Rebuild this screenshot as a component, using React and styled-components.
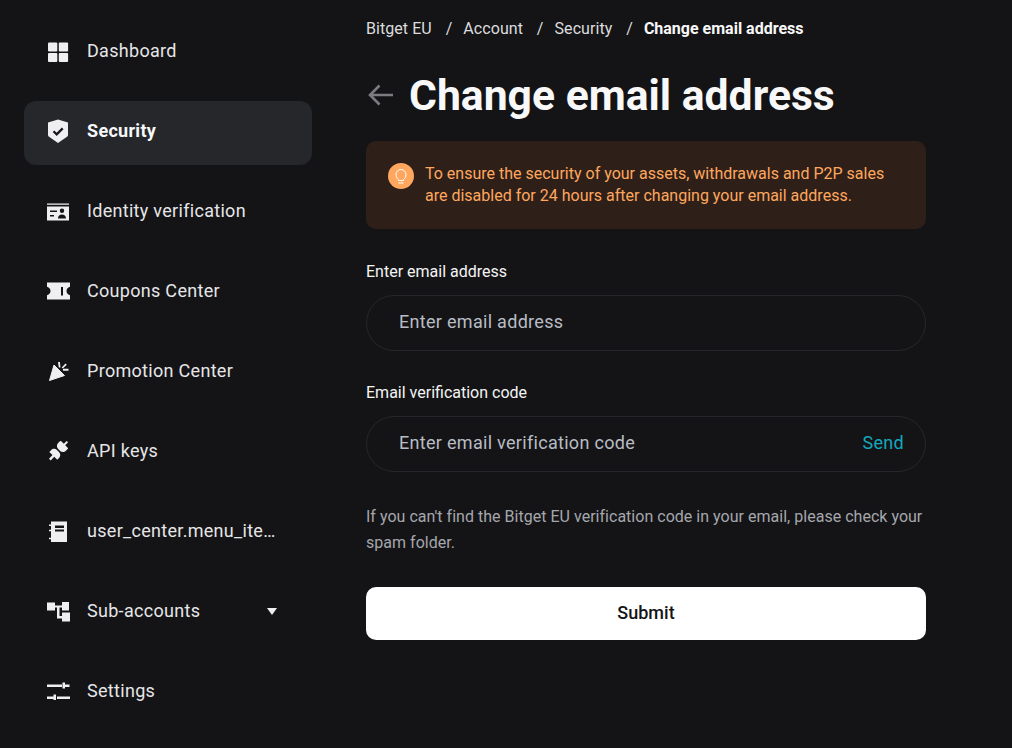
import React from 'react';
import styled, {createGlobalStyle} from 'styled-components'

const GlobalStyle = createGlobalStyle`
  html, body {
    margin: 0;
    padding: 0;
    background: #141416;
  }
  * {
    box-sizing: border-box;
  }
`

const Page = styled.div`
  width: 1012px;
  height: 748px;
  overflow: hidden;
  display: flex;
  background: #141416;
  color: #f4f4f5;
  font-family: Roboto, "Liberation Sans", sans-serif;
`

const Sidebar = styled.nav`
  width: 366px;
  flex-shrink: 0;
  padding: 21px 54px 0 24px;
  display: flex;
  flex-direction: column;
  gap: 16px;
`

const MenuItem = styled.div`
  height: 64px;
  flex-shrink: 0;
  padding: 0 33px 5px 23px;
  display: flex;
  align-items: center;
  border-radius: 12px;
  background: ${props => props.$active ? '#25272b' : 'transparent'};
  font-size: 18px;
  letter-spacing: .3px;
  font-weight: ${props => props.$active ? 700 : 400};
  color: ${props => props.$active ? '#f8f8f9' : '#e6e6e8'};
`

const MenuIcon = styled.svg`
  width: 24px;
  height: 24px;
  flex-shrink: 0;
  margin-right: 16px;
  fill: #efeff1;
`

const MenuLabel = styled.span`
  flex: 1;
  min-width: 0;
  overflow: hidden;
  text-overflow: ellipsis;
  white-space: nowrap;
`

const Caret = styled.span`
  width: 0;
  height: 0;
  margin: 2px 2px 0 8px;
  border-left: 5px solid transparent;
  border-right: 5px solid transparent;
  border-top: 7px solid #efeff1;
`

const Main = styled.main`
  width: 560px;
  display: flex;
  flex-direction: column;
`

const Breadcrumb = styled.div`
  height: 56px;
  display: flex;
  align-items: center;
  font-size: 16px;
  letter-spacing: .06px;
  color: #dcdcdf;
`

const Separator = styled.span`
  margin: 0 11px 0 13.9px;
`

const Current = styled.span`
  font-weight: 700;
  letter-spacing: 0;
  color: #f8f8f9;
`

const TitleRow = styled.div`
  height: 62px;
  margin: 8px 0 15px;
  display: flex;
  align-items: center;
  gap: 13px;
`

const BackIcon = styled.svg`
  width: 30px;
  height: 30px;
  fill: none;
  stroke: #7b7b80;
  stroke-width: 2.6;
`

const Title = styled.h1`
  margin: 0;
  font-size: 42.7px;
  font-weight: 700;
  color: #f8f8f9;
`

const Alert = styled.div`
  height: 88px;
  margin-bottom: 30px;
  padding: 0 22px;
  display: flex;
  align-items: center;
  gap: 11px;
  border-radius: 10px;
  background: #2e2018;
`

const AlertIcon = styled.span`
  width: 26px;
  height: 26px;
  margin-top: -18px;
  flex-shrink: 0;
  display: flex;
  align-items: center;
  justify-content: center;
  border-radius: 50%;
  background: #ffa75e;
`

const AlertText = styled.div`
  font-size: 16px;
  line-height: 22px;
  color: #ffa75e;
`

const Field = styled.div`
  display: flex;
  flex-direction: column;
  margin-bottom: 29.5px;
`

const Label = styled.label`
  height: 24px;
  margin-bottom: 11.5px;
  display: flex;
  align-items: center;
  font-size: 16px;
  font-weight: 400;
  color: #f4f4f5;
`

const InputBox = styled.div`
  height: 56px;
  padding: 0 21px 2px 32px;
  display: flex;
  align-items: center;
  justify-content: space-between;
  border: 1px solid #26272a;
  border-radius: 28px;
  font-size: 18px;
  letter-spacing: .3px;
  color: #b9bcc4;
`

const SendLink = styled.span`
  color: #14a7bd;
`

const Help = styled.p`
  margin: 3px 0 31px;
  font-size: 16px;
  letter-spacing: .02px;
  line-height: 26px;
  color: #a5a7ad;
`

const SubmitButton = styled.button`
  height: 53px;
  padding: 0 0 2px;
  border: none;
  border-radius: 10px;
  background: #ffffff;
  color: #141416;
  font-family: inherit;
  font-size: 18px;
  font-weight: 500;
`

const icons = {
  dashboard: <>
    <rect x="1" y="3.500" width="9.300" height="9" rx="1"/>
    <rect x="11.800" y="3.500" width="9.300" height="9" rx="1"/>
    <rect x="1" y="14" width="9.300" height="9" rx="1"/>
    <rect x="11.800" y="14" width="9.300" height="9" rx="1"/>
  </>,
  security: <>
    <path d="M11 .5 21 3.500v12.500c0 .8-.4 1.400-1 1.800L11 24 2 17.800c-.6-.4-1-1-1-1.800V3.500L11 .5z"/>
    <path d="m6.500 12.200 3.200 3.200 6-6" fill="none" stroke="#17181b" strokeWidth="2.300"/>
  </>,
  identity: <path fillRule="evenodd" d="M0 4.500h22V5.700H0V4.500zm0 3h22v14H0v-14zM3 11.500V13h7v-1.500H3zm0 4.500v1.500h4V16H3zM15 9.500a2.200 2.200 0 1 0 0 4.400 2.200 2.200 0 0 0 0-4.400zM11 19.500h8c0-2.400-1.800-4-4-4s-4 1.600-4 4z"/>,
  coupons: <path fillRule="evenodd" d="M0 3.500h23v4.200c-2.500 1-3.500 2.400-3.500 4.300s1 3.300 3.500 4.300v4.200H0v-4.200C2.500 15.300 3.500 13.900 3.500 12S2.500 8.700 0 7.700V3.500zM14 8v8.500h2V8h-2z"/>,
  promotion: <>
    <path d="M7 6 17.500 16.500 2.500 21.500 7 6z" stroke="#efeff1" strokeWidth="1" strokeLinejoin="round"/>
    <path d="M11 3h1.900l.6 5.500h-1.700L11 3zM18.500 4.500l1.300 1.300-4 3.700-1.100-1.100 3.800-3.900zM16 9.800h5.500v1.900H16V9.800z"/>
  </>,
  api: <g transform="rotate(45 11.500 11.500)">
    <path d="M10.500-1h2v4h3.500a1 1 0 0 1 1 1v2.500c0 2-1.500 4-4 4.200H10c-2.500-.2-4-2.200-4-4.200V4a1 1 0 0 1 1-1h3.500V-1z"/>
    <path d="M10 12.200h3.200c2.500.2 4 2.200 4 4.300V19H13v5h-2.500v-5H6v-2.500c0-2.100 1.500-4.100 4-4.300z"/>
  </g>,
  ledger: <path fillRule="evenodd" d="M4 2.500h16V23H4v-2.800H2v-1.500h2v-6.500H2v-1.500h2V7H2V5.500h2v-3zM8 6.500V9h9V6.500H8zm0 4v2h9v-2H8z"/>,
  accounts: <>
    <rect x="0" y="3.500" width="8" height="8"/>
    <rect x="15" y="3" width="7" height="8.500"/>
    <rect x="15" y="13.500" width="8" height="9"/>
    <path d="M8 6.500h7v2h-2.500v8.500H15v2.500h-5V8.500H8v-2z"/>
  </>,
  settings: <path d="M0 5.500h15V8H0V5.500zM15.500 3.500H18v2h4.500V8H18v1.500h-2.500v-6zM10 17.500h13V20H10v-2.500zM6.500 15.500H9v5.500H6.500V20H0v-2.500h6.500v-2z"/>,
}

const menu = [
  {label: 'Dashboard', icon: 'dashboard'},
  {label: 'Security', icon: 'security', active: true},
  {label: 'Identity verification', icon: 'identity'},
  {label: 'Coupons Center', icon: 'coupons'},
  {label: 'Promotion Center', icon: 'promotion'},
  {label: 'API keys', icon: 'api'},
  {label: 'user_center.menu_item.ledger', icon: 'ledger'},
  {label: 'Sub-accounts', icon: 'accounts', caret: true},
  {label: 'Settings', icon: 'settings'},
]

function App() {
  return (
    <Page>
      <GlobalStyle/>
      <Sidebar>
        {menu.map(item => (
          <MenuItem key={item.label} $active={item.active}>
            <MenuIcon viewBox="0 0 24 24">{icons[item.icon]}</MenuIcon>
            <MenuLabel>{item.label}</MenuLabel>
            {item.caret && <Caret/>}
          </MenuItem>
        ))}
      </Sidebar>
      <Main>
        <Breadcrumb>
          Bitget EU<Separator>/</Separator>Account<Separator>/</Separator>Security<Separator>/</Separator>
          <Current>Change email address</Current>
        </Breadcrumb>
        <TitleRow>
          <BackIcon viewBox="0 0 30 30"><path d="M27 15H4M13.500 5.500 4 15l9.500 9.500"/></BackIcon>
          <Title>Change email address</Title>
        </TitleRow>
        <Alert>
          <AlertIcon>
            <svg width="18" height="18" viewBox="0 0 18 18" fill="none" stroke="#fff" strokeWidth="1">
              <path d="M6.500 12.500C5 11.500 4 10 4 7.500a5 5 0 0 1 10 0c0 2.500-1 4-2.500 5v1h-5v-1zM6.500 16h5"/>
            </svg>
          </AlertIcon>
          <AlertText>
            To ensure the security of your assets, withdrawals and P2P sales<br/>
            are disabled for 24 hours after changing your email address.
          </AlertText>
        </Alert>
        <Field>
          <Label>Enter email address</Label>
          <InputBox>Enter email address</InputBox>
        </Field>
        <Field>
          <Label>Email verification code</Label>
          <InputBox>Enter email verification code<SendLink>Send</SendLink></InputBox>
        </Field>
        <Help>If you can't find the Bitget EU verification code in your email, please check your spam folder.</Help>
        <SubmitButton>Submit</SubmitButton>
      </Main>
    </Page>
  )
}

export default App
